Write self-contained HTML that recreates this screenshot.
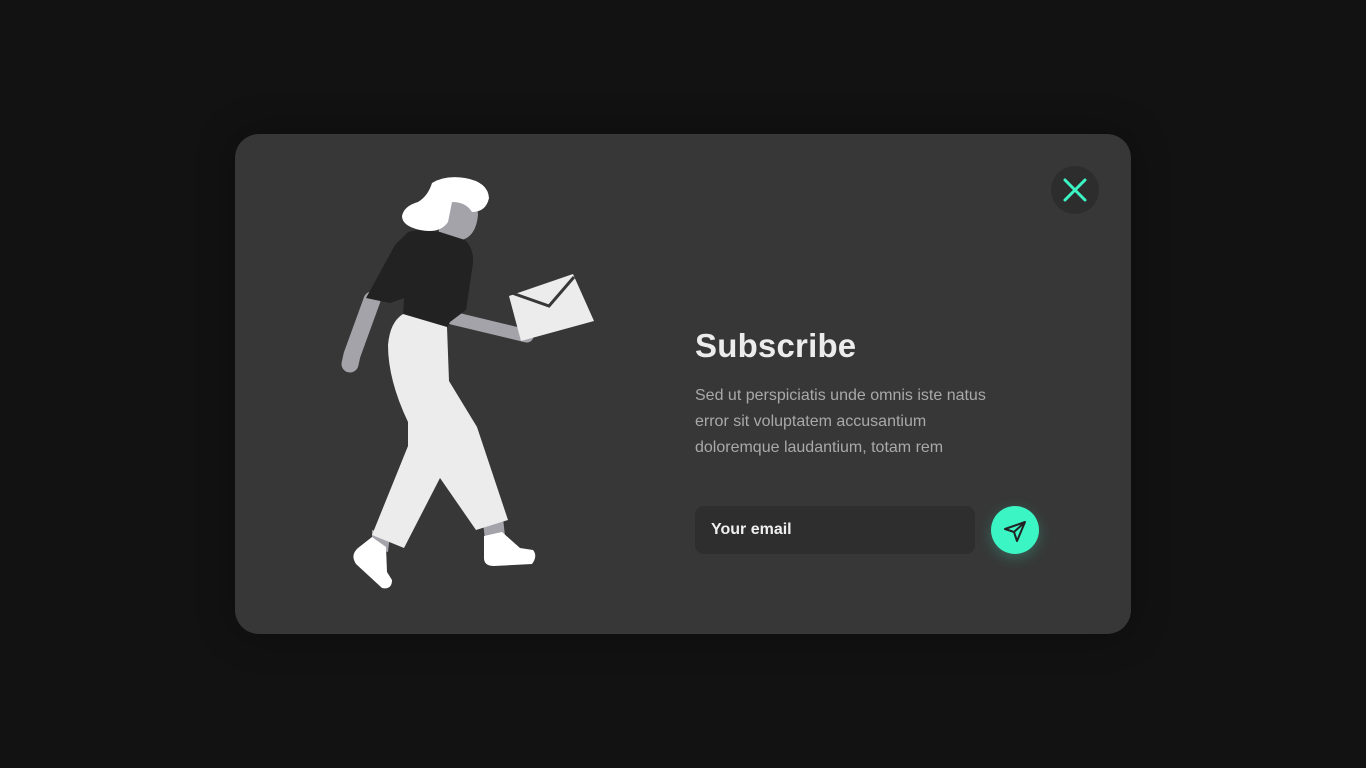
<!DOCTYPE html>
<html><head><meta charset="utf-8"><style>
html,body{margin:0;padding:0;width:1366px;height:768px;background:#121212;overflow:hidden;font-family:"Liberation Sans",sans-serif}
.card{position:absolute;left:235px;top:134px;width:896px;height:500px;background:#373737;border-radius:24px;box-shadow:0 0 40px rgba(0,0,0,.3)}
.close{position:absolute;left:1051px;top:166px;width:48px;height:48px;border-radius:50%;background:#2d2d2d}
h1{position:absolute;left:695px;top:327px;margin:0;font-size:33px;font-weight:bold;color:#ececec;letter-spacing:0.2px}
p{position:absolute;left:695px;top:383px;margin:0;width:318px;font-size:16px;line-height:26px;color:#a9a9a9}
.inp{position:absolute;left:695px;top:506px;width:280px;height:48px;background:#2e2e2e;border-radius:9px;color:#f0f0f0;font-size:16px;font-weight:bold;line-height:48px;box-sizing:border-box;padding-left:16px}
.send{position:absolute;left:991px;top:506px;width:48px;height:48px;border-radius:50%;background:#3cf5c4;box-shadow:0 4px 14px rgba(60,245,196,.25)}
</style></head><body>
<div class="card"></div>
<div class="close"></div>
<svg width="1366" height="768" style="position:absolute;left:0;top:0">
<path d="M452 318 L527 336" stroke="#a4a3aa" stroke-width="13" stroke-linecap="round"/>
<path d="M372 300 L352 355 L350 364" stroke="#a4a3aa" stroke-width="17" stroke-linecap="round" fill="none"/>
<path d="M447 200 Q478 198 478 215 Q476 236 462 240 L458 248 L438 244 L440 215 Z" fill="#a4a3aa"/>
<path d="M372 530 L390 534 L388 552 L372 548 Z" fill="#a4a3aa"/>
<path d="M483 522 L503 518 L505 536 L485 540 Z" fill="#a4a3aa"/>
<path d="M408 232 Q420 228 440 232 L465 240 Q476 250 472 270 L466 310 L450 322 L447 328 L403 315 L404 298 L390 303 L366 298 L395 245 Z" fill="#222"/>
<path d="M403 314 L447 327 L449 381 L477 427 L508 520 L476 530 L440 478 L404 548 L372 535 L408 446 L408 422 Q388 380 388 345 Q390 322 403 314 Z" fill="#ececec"/>
<path d="M372 537 L386 547 L387 572 L392 580 Q392 590 382 588 L356 564 Q350 555 358 548 Z" fill="#fff"/>
<path d="M484 536 L502 532 L520 548 L533 550 Q538 556 532 564 L494 566 Q484 566 484 558 Z" fill="#fff"/>
<path d="M432 183 Q445 175 465 178 Q488 182 489 198 Q486 212 472 212 Q466 202 452 202 L448 222 Q440 234 420 230 Q402 226 402 216 Q404 206 418 202 Q428 196 432 183 Z" fill="#fff"/>
<path d="M509 296 L573 274 L594 321 L521 341 Z" fill="#ececec"/>
<path d="M512 293 L549 306 L574 277" stroke="#373737" stroke-width="3" fill="none"/>
<path d="M1065 180 L1085 200 M1085 180 L1065 200" stroke="#3cf5c4" stroke-width="3" stroke-linecap="round"/>
</svg>
<h1>Subscribe</h1>
<p>Sed ut perspiciatis unde omnis iste natus error sit voluptatem accusantium doloremque laudantium, totam rem</p>
<div class="inp">Your email</div>
<div class="send"><svg width="48" height="48" viewBox="0 0 48 48"><path d="M34 16 L14 23 L23 26 L26 35 Z M23 26 L34 16" fill="none" stroke="#222" stroke-width="2" stroke-linejoin="round"/></svg></div>
</body></html>
